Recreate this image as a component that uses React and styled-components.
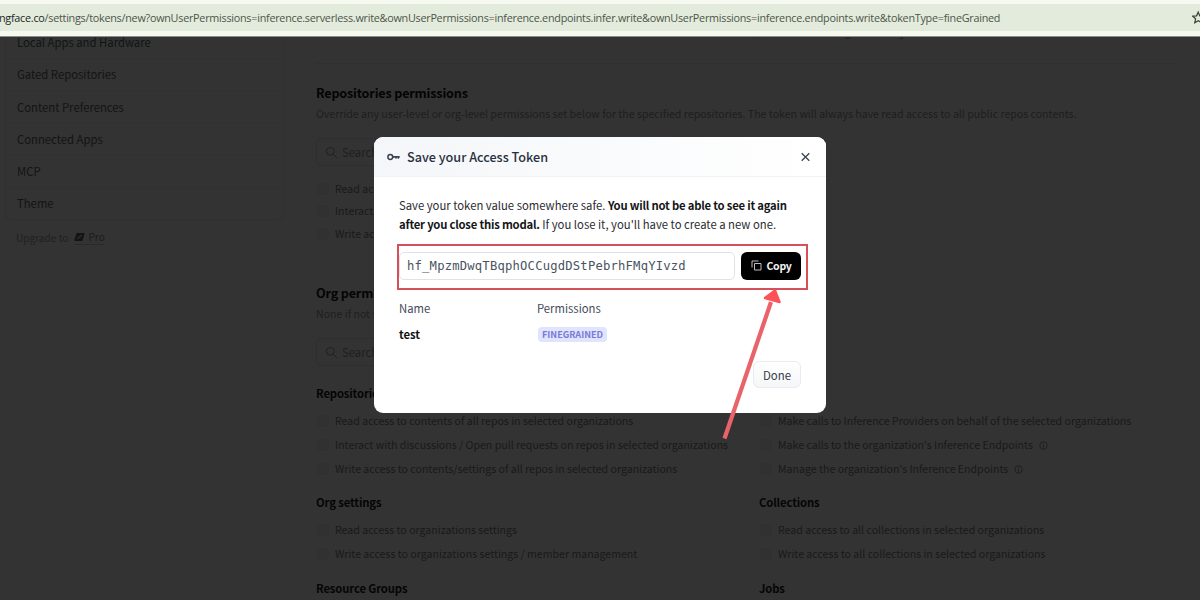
import React from "react";
import styled, { createGlobalStyle } from "styled-components";

const Global = createGlobalStyle`
  * { box-sizing: border-box; }
  body { margin: 0; background: #333; }
`;

const Screen = styled.div`
  position: relative;
  width: 1200px;
  height: 600px;
  overflow: hidden;
  display: flex;
  flex-direction: column;
  background: #333333;
  font-family: "Noto Sans CJK SC", "Open Sans", sans-serif;
`;

const BrowserBar = styled.header`
  flex: none;
  height: 37px;
  padding: 4px 0 5px;
  background: #f6f9ef;
  border-bottom: 1px solid #8b8d87;
`;

const AddressField = styled.div`
  height: 27px;
  display: flex;
  align-items: center;
  justify-content: space-between;
  background: #e3ebdc;
`;

const Url = styled.span`
  margin-left: -1px;
  font-family: "Open Sans", sans-serif;
  font-size: 10.8px;
  line-height: 20px;
  letter-spacing: -0.255px;
  white-space: nowrap;
  color: #4d5549;
  b { font-weight: 400; color: #20261e; }
`;

const StarIcon = styled.svg`
  flex: none;
  margin-right: -8px;
`;

const Page = styled.div`
  flex: 1;
  min-height: 0;
  display: flex;
  overflow: hidden;
`;

const Sidebar = styled.aside`
  flex: none;
  width: 316px;
  padding-left: 5px;
`;

const NavCard = styled.nav`
  width: 280px;
  border: solid #303030;
  border-width: 0 1px 1px;
  border-radius: 0 0 6px 6px;
  margin-top: -11.4px;
`;

const NavItem = styled.a`
  display: flex;
  align-items: center;
  height: 32.2px;
  padding-left: 11px;
  font-size: 11.3px;
  line-height: 20px;
  color: #121314;
  & + & { border-top: 1px solid #313131; }
`;

const Upgrade = styled.div`
  display: flex;
  align-items: center;
  gap: 6px;
  margin: 8px 0 0 11px;
  font-size: 10.1px;
  line-height: 19px;
  color: #212121;
`;

const ProLink = styled.span`
  display: flex;
  align-items: center;
  gap: 3px;
  height: 16px;
  color: #1b1b1b;
  border-bottom: 1px solid #2a2a2a;
`;

const Main = styled.main`
  width: 858px;
  flex: none;
`;

const Clipped = styled.div`
  display: flex;
  height: 27px;
  padding-left: 434px;
  border-bottom: 1px solid #2f2f2f;
  & > div { margin-top: -17px; }
`;

const Title = styled.h2`
  margin: ${(p) => p.$top}px 0 0;
  font-size: 12.6px;
  line-height: 20px;
  letter-spacing: -0.17px;
  font-weight: 700;
  color: #040404;
`;

const Hint = styled.p`
  margin: 1px 0 0;
  font-size: 10.58px;
  line-height: 20px;
  white-space: nowrap;
  color: #1d1e1e;
`;

const SearchBox = styled.div`
  width: 400px;
  height: 28px;
  margin: 14px 0 11px;
  padding-left: 8px;
  display: flex;
  align-items: center;
  gap: 4px;
  border: 1px solid #2e2e2e;
  border-radius: 5px;
  font-size: 11.3px;
  color: #1f1f1f;
`;

const Columns = styled.div`
  display: grid;
  grid-template-columns: 443px 415px;
  margin-top: ${(p) => p.$top}px;
`;

const GroupTitle = styled.h3`
  margin: 0 0 6px;
  font-size: 11.3px;
  line-height: 20px;
  letter-spacing: -0.14px;
  font-weight: 700;
  color: #050505;
`;

const Option = styled.label`
  display: flex;
  align-items: center;
  gap: 6px;
  height: ${(p) => p.$h || 24}px;
  padding-left: 1px;
  font-size: 10.58px;
  line-height: 20px;
  white-space: nowrap;
  color: #191919;
`;

const Box = styled.i`
  flex: none;
  width: 12px;
  height: 12px;
  border-radius: 3px;
  background: #313131;
  border: 1px solid #303030;
`;

const Modal = styled.section`
  position: absolute;
  left: 374px;
  top: 137px;
  width: 452px;
  height: 276px;
  border-radius: 9px;
  background: #fff;
  overflow: hidden;
`;

const ModalHeader = styled.div`
  height: 40px;
  padding: 0 14px 0 13px;
  display: flex;
  align-items: center;
  border-bottom: 1px solid #f2f3f5;
  background: linear-gradient(90deg, #f4f6f9, #ffffff);
`;

const ModalTitle = styled.h1`
  flex: 1;
  margin: 0 0 0 7px;
  font-size: 12.65px;
  line-height: 20px;
  font-weight: 500;
  color: #283040;
`;

const ModalBody = styled.div`
  padding: 19px 25px 0;
`;

const Notice = styled.p`
  margin: 0;
  font-size: 11.3px;
  line-height: 19px;
  white-space: nowrap;
  color: #2b2d31;
  b { font-weight: 700; letter-spacing: -0.22px; color: #141518; }
`;

const TokenRow = styled.div`
  display: flex;
  gap: 6px;
  margin-top: 18px;
`;

const TokenField = styled.div`
  width: 336px;
  height: 28px;
  padding-left: 7px;
  border: 1px solid #dfe3e8;
  border-radius: 5px;
  font-family: "DejaVu Sans Mono", monospace;
  font-size: 12.2px;
  letter-spacing: 0.2px;
  line-height: 27px;
  color: #4a5361;
`;

const CopyButton = styled.button`
  width: 60px;
  height: 28px;
  padding: 0 0 1px;
  display: flex;
  align-items: center;
  justify-content: center;
  gap: 5px;
  border: 0;
  border-radius: 6px;
  background: #000;
  color: #f2f2f2;
  font-family: inherit;
  font-size: 10.5px;
  letter-spacing: -0.3px;
  font-weight: 700;
`;

const Details = styled.div`
  display: grid;
  grid-template-columns: 138px 1fr;
  row-gap: 6px;
  margin-top: 18px;
  font-size: 11.3px;
  line-height: 20px;
  color: #444b58;
  b { color: #111; font-weight: 700; letter-spacing: -0.1px; }
`;

const Tag = styled.span`
  display: inline-block;
  height: 15px;
  margin: 3px 0 0 1px;
  padding: 0 4px;
  border-radius: 4px;
  background: #e0e4fd;
  color: #797bd9;
  font-size: 9.1px;
  line-height: 15px;
  font-weight: 700;
  vertical-align: top;
`;

const Footer = styled.div`
  display: flex;
  justify-content: flex-end;
  margin-top: 17px;
`;

const DoneButton = styled.button`
  width: 48px;
  height: 27px;
  padding: 0;
  border: 1px solid #e9ebee;
  border-radius: 6px;
  background: linear-gradient(#ffffff, #f5f6f8);
  font-family: inherit;
  font-size: 11.4px;
  color: #343b47;
`;

const Highlight = styled.div`
  position: absolute;
  left: 397px;
  top: 244px;
  width: 411px;
  height: 46px;
  border: 2px solid #d5515a;
`;

const Arrow = styled.svg`
  position: absolute;
  left: 715px;
  top: 285px;
`;

const Search = () => (
  <svg width="13" height="13" viewBox="0 0 13 13" fill="none" stroke="#202020" strokeWidth="1">
    <circle cx="5.3" cy="5.3" r="3.9" />
    <path d="M8.2 8.2 12 12" />
  </svg>
);

const Info = () => (
  <svg width="9" height="9" viewBox="0 0 9 9" fill="none" stroke="#1c1c1c" strokeWidth="0.8">
    <circle cx="4.5" cy="4.5" r="3.7" />
    <path d="M4.5 4v2.6M4.5 2.3v.9" />
  </svg>
);

function Group({ title, options, heights = [] }) {
  return (
    <div>
      {title && <GroupTitle>{title}</GroupTitle>}
      {options.map(([text, info], i) => (
        <Option key={text} $h={heights[i]}>
          <Box />
          <span>{text}</span>
          {info && <Info />}
        </Option>
      ))}
    </div>
  );
}

const nav = ["Local Apps and Hardware", "Gated Repositories", "Content Preferences", "Connected Apps", "MCP", "Theme"];

export default function App() {
  return (
    <Screen>
      <Global />
      <BrowserBar>
        <AddressField>
          <Url>
            <b>ngface.co</b>/settings/tokens/new?ownUserPermissions=inference.serverless.write&amp;ownUserPermissions=inference.endpoints.infer.write&amp;ownUserPermissions=inference.endpoints.write&amp;tokenType=fineGrained
          </Url>
          <StarIcon width="16" height="16" viewBox="0 0 16 16" fill="none" stroke="#3f463c" strokeWidth="1.3">
            <path d="M6.2 2.2 7.8 5.8l3.9.4-2.9 2.6.8 3.9-3.4-2-3.4 2 .8-3.9L.7 6.2l3.9-.4z" />
          </StarIcon>
        </AddressField>
      </BrowserBar>
      <Page>
        <Sidebar>
          <NavCard>
            {nav.map((n) => <NavItem key={n}>{n}</NavItem>)}
          </NavCard>
          <Upgrade>
            Upgrade to
            <ProLink>
              <svg width="11" height="10" viewBox="0 0 11 10">
                <path fill="#141414" d="M3.6 1h6c.8 0 1.1.5.9 1.2L8.7 7.8c-.2.8-.7 1.2-1.5 1.2H1.200C.5 9 .2 8.500.4 7.800L2.200 2.200C2.400 1.400 2.900 1 3.600 1z" />
                <path stroke="#303030" strokeWidth="1.1" d="M3 6.800 7.800 3.200" />
              </svg>
              Pro
            </ProLink>
          </Upgrade>
        </Sidebar>
        <Main>
          <Clipped>
            <Group options={[["Start and manage Jobs on your behalf"]]} />
          </Clipped>
          <Title $top={19}>Repositories permissions</Title>
          <Hint>Override any user-level or org-level permissions set below for the specified repositories. The token will always have read access to all public repos contents.</Hint>
          <SearchBox><Search />Search for repos</SearchBox>
          <Group
            options={[
              ["Read access to contents of selected repos"],
              ["Interact with discussions / Open pull requests on selected repos"],
              ["Write access to contents/settings of selected repos"],
            ]}
            heights={[23, 22, 23]}
          />
          <Title $top={38}>Org permissions</Title>
          <Hint>None if not specified</Hint>
          <SearchBox><Search />Search for organizations</SearchBox>
          <Columns $top={17}>
            <Group
              title="Repositories"
              options={[
                ["Read access to contents of all repos in selected organizations"],
                ["Interact with discussions / Open pull requests on repos in selected organizations"],
                ["Write access to contents/settings of all repos in selected organizations"],
              ]}
            />
            <Group
              title="Inference"
              options={[
                ["Make calls to Inference Providers on behalf of the selected organizations"],
                ["Make calls to the organization's Inference Endpoints", true],
                ["Manage the organization's Inference Endpoints", true],
              ]}
            />
          </Columns>
          <Columns $top={11}>
            <Group
              title="Org settings"
              options={[["Read access to organizations settings"], ["Write access to organizations settings / member management"]]}
            />
            <Group
              title="Collections"
              options={[["Read access to all collections in selected organizations"], ["Write access to all collections in selected organizations"]]}
            />
          </Columns>
          <Columns $top={12}>
            <GroupTitle>Resource Groups</GroupTitle>
            <GroupTitle>Jobs</GroupTitle>
          </Columns>
        </Main>
      </Page>

      <Modal>
        <ModalHeader>
          <svg width="13" height="8" viewBox="0 0 13 8" fill="none" stroke="#3b4352">
            <circle cx="3.300" cy="4" r="2.400" strokeWidth="1.500" />
            <path strokeWidth="1.700" d="M5.700 3.800H12.700" />
            <path strokeWidth="1.300" d="M9 4v1.800M11.400 4v1.800" />
          </svg>
          <ModalTitle>Save your Access Token</ModalTitle>
          <svg width="13" height="10" viewBox="0 0 13 10" fill="none" stroke="#3b4352" strokeWidth="1.300">
            <path d="M2.700 1.200 10.300 8.800M10.300 1.200 2.700 8.800" />
          </svg>
        </ModalHeader>
        <ModalBody>
          <Notice>
            Save your token value somewhere safe. <b>You will not be able to see it again</b>
            <br />
            <b>after you close this modal.</b> If you lose it, you'll have to create a new one.
          </Notice>
          <TokenRow>
            <TokenField>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</TokenField>
            <CopyButton>
              <svg width="11" height="11" viewBox="0 0 11 11" fill="none" stroke="#bdbdbd" strokeWidth="1">
                <path d="M3.500 3.500h6.500v6.500H3.500z" />
                <path d="M1 7.500V1h6.500" />
              </svg>
              Copy
            </CopyButton>
          </TokenRow>
          <Details>
            <span>Name</span>
            <span>Permissions</span>
            <b>test</b>
            <span><Tag>FINEGRAINED</Tag></span>
          </Details>
          <Footer>
            <DoneButton>Done</DoneButton>
          </Footer>
        </ModalBody>
      </Modal>

      <Highlight />
      <Arrow width="75" height="160" viewBox="0 0 75 160">
        <path d="M9.500 153.500 56 17" stroke="#e8636a" strokeWidth="4.200" fill="none" />
        <path d="M60 5.500 64.500 17 50 13z" fill="#fb5458" stroke="#fb5458" strokeWidth="2.500" strokeLinejoin="round" />
      </Arrow>
    </Screen>
  );
}
